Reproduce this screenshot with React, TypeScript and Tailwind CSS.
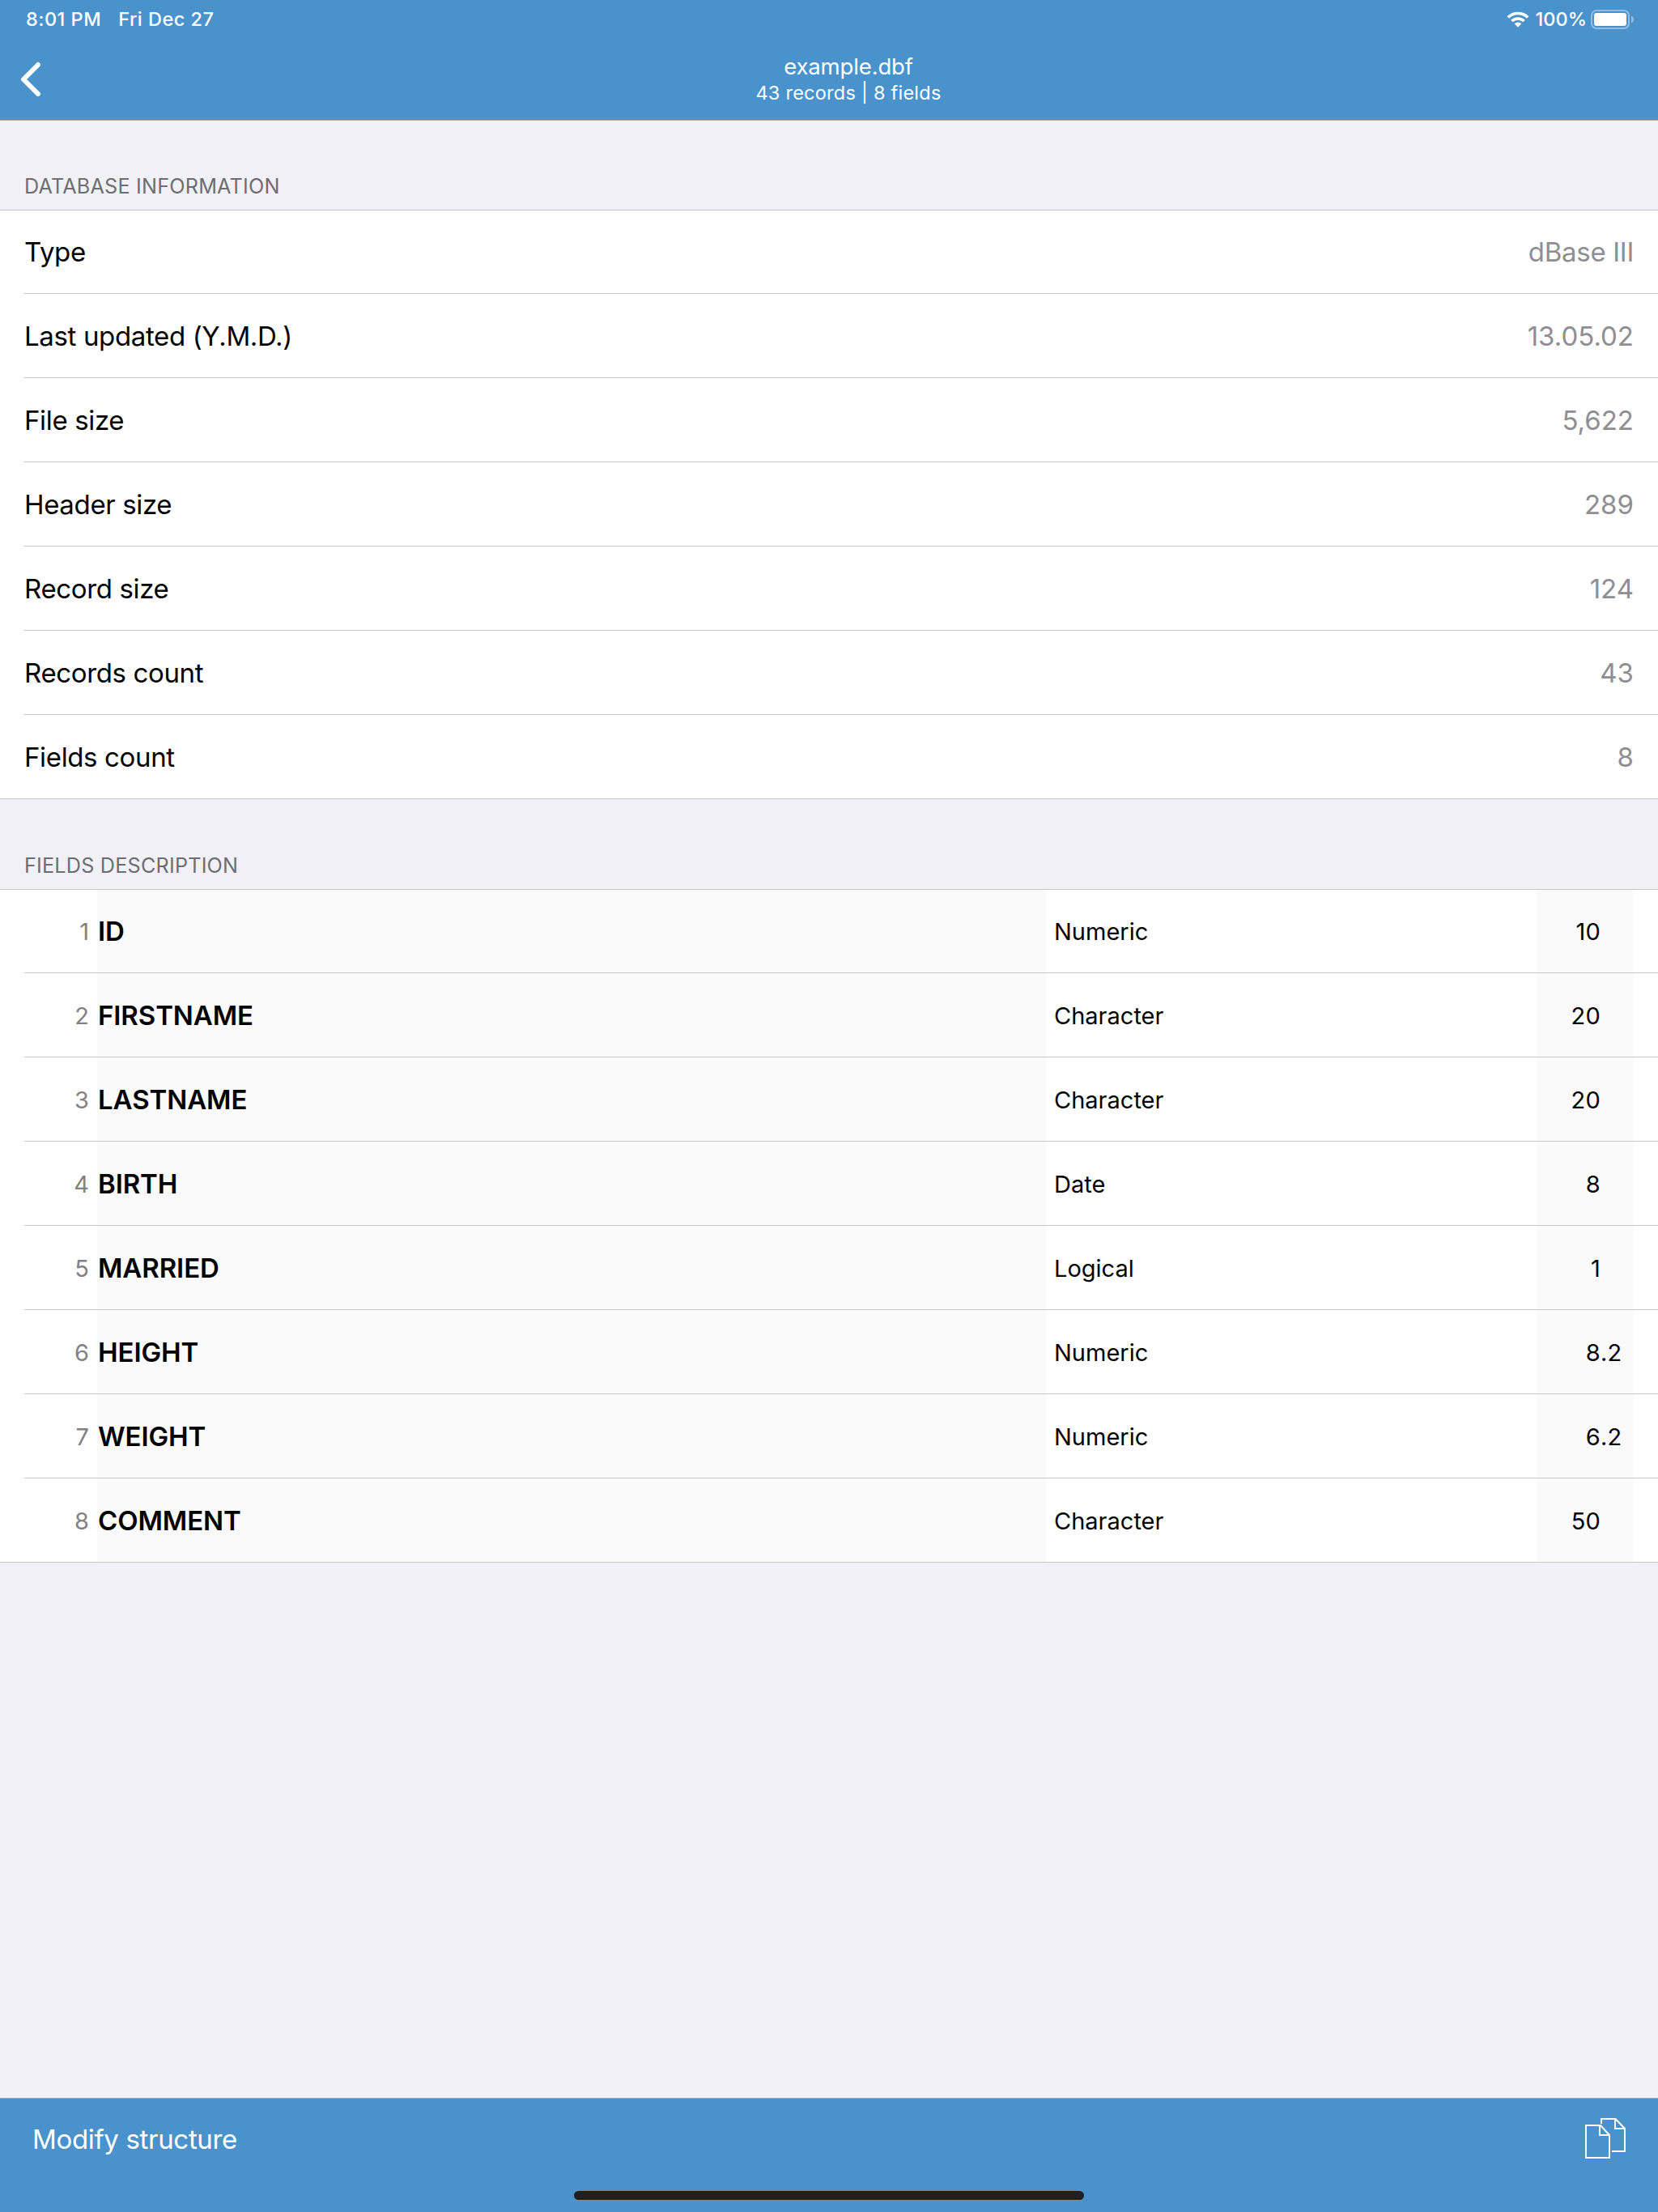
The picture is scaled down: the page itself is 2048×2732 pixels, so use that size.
import { clsx } from "clsx"

const info = [
  { label: "Type", value: "dBase III" },
  { label: "Last updated (Y.M.D.)", value: "13.05.02" },
  { label: "File size", value: "5,622" },
  { label: "Header size", value: "289" },
  { label: "Record size", value: "124" },
  { label: "Records count", value: "43" },
  { label: "Fields count", value: "8" },
]

const fields = [
  { name: "ID", type: "Numeric", size: "10" },
  { name: "FIRSTNAME", type: "Character", size: "20" },
  { name: "LASTNAME", type: "Character", size: "20" },
  { name: "BIRTH", type: "Date", size: "8" },
  { name: "MARRIED", type: "Logical", size: "1" },
  { name: "HEIGHT", type: "Numeric", size: "8", decimals: ".2" },
  { name: "WEIGHT", type: "Numeric", size: "6", decimals: ".2" },
  { name: "COMMENT", type: "Character", size: "50" },
]

function WifiIcon() {
  return (
    <svg width="28" height="20" viewBox="0 0 28 20" fill="white">
      <path d="M0.6 6.2 A19 19 0 0 1 27.4 6.2 L24.9 8.7 A15.4 15.4 0 0 0 3.1 8.7 Z" />
      <path d="M5.2 10.8 A12.4 12.4 0 0 1 22.8 10.8 L20.2 13.3 A8.8 8.8 0 0 0 7.8 13.3 Z" />
      <path d="M9.7 15.3 A6.2 6.2 0 0 1 18.3 15.3 L14 19.8 Z" />
    </svg>
  )
}

function BatteryIcon() {
  return (
    <svg width="54" height="24" viewBox="0 0 54 24">
      <rect x="1" y="1" width="46" height="22" rx="6" fill="none" stroke="white" strokeOpacity="0.4" strokeWidth="2" />
      <rect x="4" y="4" width="40" height="16" rx="3.2" fill="white" />
      <path d="M50 7.5 C54 9 54 15 50 16.5 Z" fill="white" fillOpacity="0.4" />
    </svg>
  )
}

function BackIcon() {
  return (
    <svg width="28" height="44" viewBox="0 0 28 44" fill="none" stroke="white" strokeWidth="6" strokeLinecap="round" strokeLinejoin="round">
      <path d="M23 4 L5 22 L23 40" />
    </svg>
  )
}

function CopyIcon() {
  return (
    <svg width="50" height="50" viewBox="0 0 50 50" fill="none" stroke="white" strokeWidth="2">
      <path d="M1 9 H19 L30 21 V49 H1 Z" />
      <path d="M18 9 V21 H30" />
      <path d="M20 7 V1 H37.5 L49 13 V41 H33" />
      <path d="M37 1 V13 H49" />
    </svg>
  )
}

function SectionTitle({ children, className }: { children: string; className: string }) {
  return (
    <div
      className={clsx(
        "flex items-end border-b border-[#c6c6c8] pb-[13px] pl-[30px] text-[25.2px] leading-[32px] tracking-[0.2px] text-[#6d6d72]",
        className
      )}
    >
      {children}
    </div>
  )
}

function rowClass(i: number, count: number) {
  if (i === 0) return "h-[103px] border-b border-[#c6c6c8]"
  if (i === count - 1) return "h-[103px]"
  return "h-[104px] border-b border-[#c6c6c8]"
}

export default function App() {
  return (
    <div className="flex h-[2732px] w-[2048px] flex-col overflow-hidden bg-[#f2f1f7] font-['Inter',sans-serif] whitespace-nowrap text-black">
      <header className="h-[149px] shrink-0 border-b border-[#a7a7aa] bg-[#4a92cc] text-white">
        <div className="flex h-12 items-center justify-between pr-[29px] pl-8 text-[23.5px] font-medium">
          <div className="flex gap-[21px] tracking-[0.5px]">
            <span>8:01 PM</span>
            <span>Fri Dec 27</span>
          </div>
          <div className="flex items-center">
            <WifiIcon />
            <span className="ml-[8px]">100%</span>
            <span className="ml-[5px]">
              <BatteryIcon />
            </span>
          </div>
        </div>
        <div className="flex h-[100px] items-center">
          <div className="w-[60px] pl-6">
            <BackIcon />
          </div>
          <div className="flex w-[1976px] flex-col items-center pt-px">
            <span className="text-[27.5px] leading-[33px] tracking-[-0.15px]">example.dbf</span>
            <span className="text-[23.5px] leading-[32px] tracking-[0.25px]">43 records | 8 fields</span>
          </div>
        </div>
      </header>

      <main className="grow">
        <SectionTitle className="h-[111px]">DATABASE INFORMATION</SectionTitle>
        <div className="border-b border-[#c6c6c8] bg-white pl-[30px]">
          {info.map(function ({ label, value }, i) {
            return (
              <div key={label} className={clsx("flex items-center justify-between pt-[2px] pr-[30px] text-[33px]", rowClass(i, info.length))}>
                <span className="tracking-[-0.36px]">{label}</span>
                <span className={clsx("text-[#8e8e93]", i === 0 && "tracking-[-0.3px]")}>{value}</span>
              </div>
            )
          })}
        </div>

        <SectionTitle className="h-[112px]">FIELDS DESCRIPTION</SectionTitle>
        <div className="border-b border-[#c6c6c8] bg-white pl-[30px]">
          {fields.map(function ({ name, type, size, decimals }, i) {
            return (
              <div key={name} className={clsx("flex items-stretch", rowClass(i, fields.length))}>
                <div className="flex w-[90px] items-center justify-end pt-[2px] pr-[10px] text-[29px] text-[#828282]">{i + 1}</div>
                <div className="flex w-[1172px] items-center bg-[#fafafa] pt-[2px] pl-px text-[33px] font-semibold tracking-[-0.1px]">{name}</div>
                <div className="flex w-[606px] items-center pt-[2px] pl-[10px] text-[29px]">{type}</div>
                <div className="flex w-[120px] items-center bg-[#fafafa] pt-[2px] text-[29px] tracking-[0.2px]">
                  <span className="w-[79px] text-right">{size}</span>
                  <span>{decimals}</span>
                </div>
              </div>
            )
          })}
        </div>
      </main>

      <footer className="flex h-[141px] shrink-0 flex-col border-t border-[#a7a7aa] bg-[#4a92cc] text-white">
        <div className="flex h-[98px] items-center justify-between px-10">
          <span className="pt-[3px] text-[33px] tracking-[-0.33px]">Modify structure</span>
          <CopyIcon />
        </div>
        <div className="mx-auto mt-[16px] h-[11px] w-[630px] rounded-full bg-[#1f1f1f]" />
      </footer>
    </div>
  )
}
